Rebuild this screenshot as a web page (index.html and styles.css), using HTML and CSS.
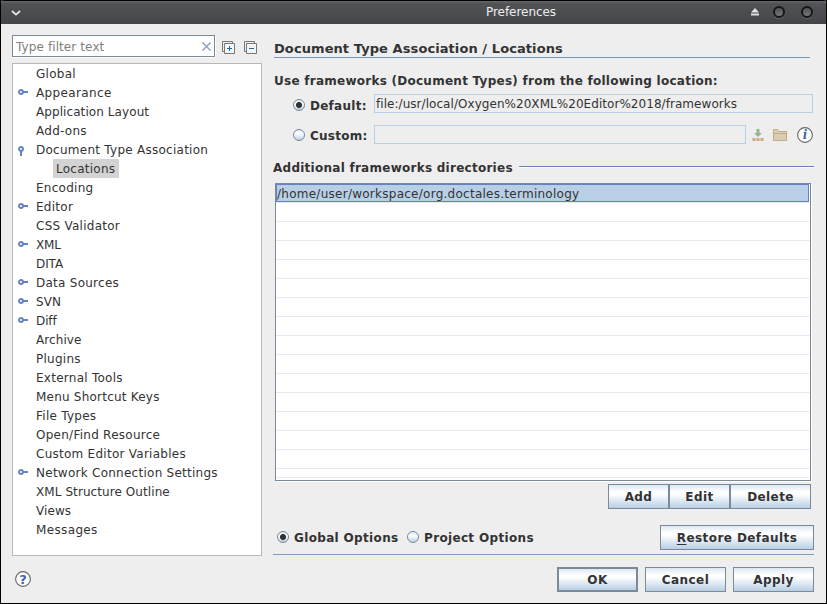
FILE: index.html
```html
<!DOCTYPE html>
<html lang="en">
<head>
<meta charset="utf-8">
<title>Preferences</title>
<link rel="stylesheet" href="styles.css">
</head>
<body>
<svg class="defs" width="0" height="0">
  <symbol id="closed" viewBox="0 0 10 6"><path d="M5 3H10" stroke="#6382bf" stroke-width="2"/><circle cx="3" cy="3" r="2" fill="#fff" stroke="#6382bf" stroke-width="1.9"/></symbol>
  <symbol id="open" viewBox="0 0 6 10"><path d="M3 5V10" stroke="#6382bf" stroke-width="2"/><circle cx="3" cy="3" r="2" fill="#fff" stroke="#6382bf" stroke-width="1.9"/></symbol>
</svg>
<div class="window">
  <header class="titlebar">
    <svg class="menu" width="10" height="6" viewBox="0 0 10 6"><path d="M1 1l4 3.6L9 1" fill="none" stroke="#e6e6e6" stroke-width="1.8"/></svg>
    <h1>Preferences</h1>
    <div class="controls">
      <svg width="8" height="8" viewBox="0 0 8 8"><path d="M4 0L8 4.500H0zM0 5.500h8v2H0z" fill="#e2e2e2"/></svg>
      <i class="knob"></i>
      <i class="knob"></i>
    </div>
  </header>
  <main class="content">
    <aside class="side">
      <div class="filter-row">
        <div class="filter"><span>Type filter text</span>
          <svg width="11" height="11" viewBox="0 0 11 11"><path d="M1.500 1.500l8 8M9.500 1.500l-8 8" stroke="#8ea3bd" stroke-width="1.500"/></svg>
        </div>
        <svg class="expand" width="13" height="13" viewBox="0 0 13 13"><path d="M2 10.500H.5V.5h10v2" fill="none" stroke="#777"/><path d="M2.500 2.500h10v10h-10z" fill="#f6f6f6" stroke="#777"/><path d="M5 7.500h5M7.500 5v5" stroke="#1769aa"/></svg>
        <svg class="collapse" width="13" height="13" viewBox="0 0 13 13"><path d="M2 10.500H.5V.5h10v2" fill="none" stroke="#777"/><path d="M2.500 2.500h10v10h-10z" fill="#f6f6f6" stroke="#777"/><path d="M5 7.500h5" stroke="#1769aa"/></svg>
      </div>
      <ul class="tree">
        <li>Global</li>
        <li class="loose"><svg class="closed"><use href="#closed"/></svg>Appearance</li>
        <li class="snug">Application Layout</li>
        <li>Add-ons</li>
        <li><svg class="open"><use href="#open"/></svg>Document Type Association</li>
        <li class="child"><span>Locations</span></li>
        <li>Encoding</li>
        <li><svg class="closed"><use href="#closed"/></svg>Editor</li>
        <li>CSS Validator</li>
        <li class="tight"><svg class="closed"><use href="#closed"/></svg>XML</li>
        <li class="tight">DITA</li>
        <li><svg class="closed"><use href="#closed"/></svg>Data Sources</li>
        <li class="snug"><svg class="closed"><use href="#closed"/></svg>SVN</li>
        <li class="tight"><svg class="closed"><use href="#closed"/></svg>Diff</li>
        <li class="snug">Archive</li>
        <li>Plugins</li>
        <li>External Tools</li>
        <li class="middle">Menu Shortcut Keys</li>
        <li>File Types</li>
        <li>Open/Find Resource</li>
        <li>Custom Editor Variables</li>
        <li><svg class="closed"><use href="#closed"/></svg>Network Connection Settings</li>
        <li class="snug">XML Structure Outline</li>
        <li class="snug">Views</li>
        <li class="loose">Messages</li>
      </ul>
    </aside>
    <section class="panel">
      <h2>Document Type Association / Locations</h2>
      <p class="prompt">Use frameworks (Document Types) from the following location:</p>
      <div class="option">
        <i class="radio on"></i><label>Default:</label>
        <div class="field">file:/usr/local/Oxygen%20XML%20Editor%2018/frameworks</div>
      </div>
      <div class="option second">
        <i class="radio"></i><label>Custom:</label>
        <div class="field"></div>
        <svg class="download" width="12" height="13" viewBox="0 0 12 13"><path d="M4.500 0h3v4H10L6 8 2 4h2.500z" fill="#8fb78b"/><path d="M.5 9h3v3h-3zM4.500 9h3v3h-3zM8.500 9h3v3h-3z" fill="#c8aa84"/></svg>
        <svg class="folder" width="14" height="12" viewBox="0 0 14 12"><path d="M.5 11.500V.5h4l1.500 2h7.500v9z" fill="#d9cdb5" stroke="#c0ab84"/><path d="M1 4.500h12" stroke="#c0ab84"/></svg>
        <svg class="info" width="16" height="16" viewBox="0 0 16 16"><circle cx="8" cy="8" r="7.400" fill="#fff" stroke="#666" stroke-width="1.100"/><text x="8.200" y="12.300" text-anchor="middle">i</text></svg>
      </div>
      <div class="group"><h3>Additional frameworks directories</h3><hr></div>
      <div class="table"><div class="selected">/home/user/workspace/org.doctales.terminology</div></div>
      <div class="actions"><button>Add</button><button>Edit</button><button class="wide">Delete</button></div>
      <div class="scope">
        <i class="radio on"></i><label class="global">Global Options</label>
        <i class="radio"></i><label class="project">Project Options</label>
        <button class="restore"><span><u>R</u>estore Defaults</span></button>
      </div>
    </section>
  </main>
  <footer class="footer">
    <svg class="help" width="16" height="16" viewBox="0 0 16 16"><circle cx="8" cy="8" r="7.400" fill="#fff" stroke="#666" stroke-width="1.100"/><text x="8" y="12.700" text-anchor="middle">?</text></svg>
    <div class="dialog-buttons"><button class="default">OK</button><button>Cancel</button><button>Apply</button></div>
  </footer>
</div>
</body>
</html>
```
FILE: styles.css
```css
* { box-sizing: border-box; margin: 0; padding: 0; }
body { width: 827px; height: 604px; overflow: hidden; background: #000; color: #333; font: 12px/19px "DejaVu Sans", sans-serif; letter-spacing: .26px; }
svg { display: block; flex: none; }
.defs { position: absolute; }
.window { width: 827px; height: 604px; border: solid #000; border-width: 0 1px 1px; border-radius: 4px 4px 0 0; background: #eee; overflow: hidden; }
.titlebar { height: 24px; display: flex; align-items: center; padding: 0 13px 0 10px; background: linear-gradient(#000 0 1px, #626469 1px 2px, #515356 3px, #434548); color: #eee; }
.menu { margin-top: 1px; }
h1 { font-size: 12px; font-weight: normal; letter-spacing: -.05px; margin-left: 465px; flex: 1; margin-top: 1px; white-space: nowrap; }
.controls { display: flex; align-items: center; }
.knob { width: 12px; height: 12px; border-radius: 50%; border: 2px solid #151617; background: linear-gradient(#505256, #747679); margin-left: 15px; box-shadow: 0 1px 0 #66686b; }
.knob:nth-of-type(1) { margin-left: 14px; margin-right: 1px; }
.content { display: flex; height: 532px; }
.side { width: 250px; margin-left: 11px; padding-top: 11px; }
.filter-row { display: flex; height: 28px; }
.filter { width: 203px; height: 22px; border: 1px solid #7a8a99; background: #fff; color: #808080; display: flex; justify-content: space-between; padding: 1px 2px 0 3px; line-height: 21px; box-shadow: 1px 1px #fff; letter-spacing: .1px; }
.filter svg { margin-top: 4px; }
.expand { margin: 6px 0 0 7px; }
.collapse { margin: 6px 0 0 9px; }
.tree { list-style: none; height: 493px; border: 1px solid #b8b8b8; background: #fff; }
.tree li { height: 19px; line-height: 21px; padding-left: 23px; display: flex; white-space: nowrap; }
.tree .loose { letter-spacing: .36px; }
.tree .middle { letter-spacing: .22px; }
.tree .snug { letter-spacing: .08px; }
.tree .tight { letter-spacing: -.1px; }
.tree .closed { width: 10px; height: 6px; margin: 6px 8px 0 -18px; }
.tree .open { width: 6px; height: 10px; margin: 6px 12px 0 -18px; }
.tree .child { padding-left: 40px; }
.child span { background: #d3d3d3; width: 66px; height: 19px; padding-left: 3px; }
.panel { width: 541px; margin-left: 11px; padding-top: 15px; }
h2, h3, .prompt, label, button { font-size: 12px; font-weight: bold; white-space: nowrap; }
h2 { height: 19px; width: 536px; margin-left: 1px; border-bottom: 1px solid #7a96b8; font-size: 13px; letter-spacing: .08px; }
.prompt { height: 19px; line-height: 21px; margin: 13px 0 0 1px; }
.option { display: flex; height: 19px; margin-top: 4px; padding: 0 1px 0 20px; }
.option.second { margin-top: 12px; padding-right: 0; }
.radio { flex: none; width: 12px; height: 12px; border: 1px solid #7a8a99; border-radius: 50%; background: linear-gradient(#dde8f3, #fff 35%, #b8cfe5); }
.radio.on { background: radial-gradient(circle, #333 0 2.700px, transparent 3.300px), linear-gradient(#dde8f3, #fff 35%, #b8cfe5); }
.option .radio { margin-top: 5px; }
.second .radio { margin-top: 4px; }
.option label { margin: 3px 0 0 5px; width: 64px; }
.second label { margin-top: 2px; }
.field { flex: 1; border: 1px solid #b8cfe5; line-height: 19px; padding-left: 1px; white-space: nowrap; letter-spacing: .05px; }
.second .field { flex: 0 0 372px; }
.download { margin: 4px 0 0 6px; }
.folder { margin: 4px 0 0 9px; }
.info { margin: 2px 0 0 10px; }
.info text { font: italic bold 12px "DejaVu Serif", serif; fill: #4463ac; }
.help text { font: bold 13px "DejaVu Sans", sans-serif; fill: #4463ac; letter-spacing: 0; }
.group { display: flex; height: 19px; line-height: 21px; margin-top: 14px; }
hr { flex: 1; height: 2px; border: 0; border-top: 1px solid #6382bf; background: #fff; margin: 8px 0 0 6px; }
.table { width: 536px; height: 298px; margin: 6px 0 0 2px; border: 1px solid #7a8a99; box-shadow: 1px 1px #fff; background: linear-gradient(#e8eaec, #e8eaec) 0 293px / 100% 1px no-repeat, repeating-linear-gradient(#fff 0 18px, #e8eaec 18px 19px); }
.selected { height: 18px; width: 533px; background: #b8cfe5; border: 1px solid #6382bf; line-height: 19px; letter-spacing: .26px; }
button { height: 25px; width: 81px; padding-top: 2px; border: 1px solid #7a8a99; background: linear-gradient(#dde8f3, #fff 30%, #fff 40%, #b8cfe5); color: #333; font-family: inherit; line-height: 21px; letter-spacing: .42px; }
.actions { display: flex; margin: 3px 0 0 335px; }
.actions button { width: 61px; }
.actions .wide { width: 81px; }
.scope { display: flex; height: 30px; margin-top: 16px; padding-left: 4px; border-bottom: 1px solid #7a9ec4; }
.scope .radio { margin-top: 6px; }
.scope label { margin: 4px 0 0 5px; letter-spacing: .34px; }
.global { width: 113px; }
.restore { width: 154px; margin-left: auto; }
u { text-underline-offset: 2px; }
.footer { display: flex; justify-content: space-between; padding: 11px 12px 0 14px; }
.help { margin-top: 4px; }
.dialog-buttons { display: flex; gap: 7px; }
.default { border-width: 2px; line-height: 19px; }
```
